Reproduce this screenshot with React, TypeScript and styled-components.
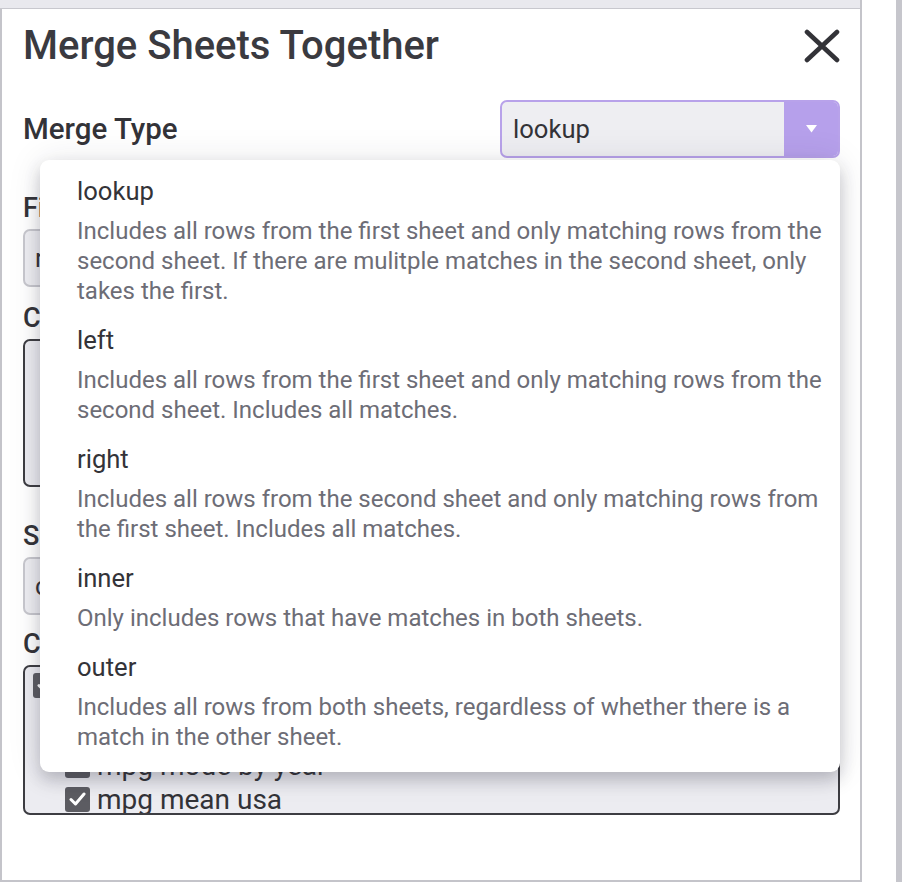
import React from "react";
import styled, { createGlobalStyle } from "styled-components";

const Global = createGlobalStyle`
  html, body { margin: 0; padding: 0; background: #ffffff; }
  body { font-family: Roboto, "Liberation Sans", sans-serif; }
  * { box-sizing: border-box; }
`;

const Page = styled.div`
  display: flex;
  width: 902px;
  height: 882px;
  overflow: hidden;
  background: #ffffff;
`;

const Column = styled.div`
  width: 862px;
  height: 882px;
  display: flex;
  flex-direction: column;
  border-right: 2px solid #c4c4ca;
  border-bottom: 2px solid #c4c4ca;
`;

const TopStrip = styled.div`
  height: 9px;
  flex: none;
  background: #e9e9ee;
  border-bottom: 1px solid #c8c8ce;
`;

const Body = styled.div`
  position: relative;
  flex: 1;
  border-left: 2px solid #c4c4ca;
  padding: 15px 20px 0 21px;
  display: flex;
  flex-direction: column;
  overflow: hidden;
`;

const Gutter = styled.div`
  width: 34px;
  flex: none;
  background: #ffffff;
`;

const ScrollBar = styled.div`
  width: 6px;
  flex: none;
  background: #c6c6cc;
`;

const Header = styled.div`
  display: flex;
  align-items: center;
  justify-content: space-between;
  height: 43px;
`;

const Title = styled.h1`
  margin: 0;
  font-size: 40px;
  line-height: 43px;
  font-weight: 500;
  color: #3a3a40;
`;

const CloseButton = styled.button`
  border: none;
  background: none;
  padding: 0;
  width: 36px;
  height: 34px;
  display: flex;
  cursor: pointer;
`;

const TypeRow = styled.div`
  display: flex;
  align-items: center;
  justify-content: space-between;
  margin-top: 33px;
  height: 58px;
`;

const BigLabel = styled.div`
  font-size: 29.5px;
  font-weight: 500;
  color: #333338;
`;

const Select = styled.div`
  width: 340px;
  height: 58px;
  border: 2px solid #b8a2ea;
  border-radius: 7px;
  background: #eeeef2;
  display: flex;
  align-items: center;
  overflow: hidden;
`;

const SelectValue = styled.div`
  flex: 1;
  padding-left: 11px;
  font-size: 25.6px;
  color: #333338;
`;

const SelectArrow = styled.div`
  width: 54px;
  align-self: stretch;
  background: #b6a0eb;
  display: flex;
  align-items: center;
  justify-content: center;
`;

const Section = styled.div<{ $gap: number }>`
  margin-top: ${(p) => p.$gap}px;
  display: flex;
  flex-direction: column;
`;

const FieldLabel = styled.div`
  font-size: 27px;
  line-height: 32px;
  font-weight: 500;
  color: #333338;
  margin-bottom: 5px;
`;

const Input = styled.div`
  height: 58px;
  border: 2px solid #c8c8ce;
  border-radius: 7px;
  background: #eeeef2;
  display: flex;
  align-items: center;
  padding-left: 10px;
  font-size: 25.6px;
  color: #333338;
`;

const ListBox = styled.div<{ $h: number }>`
  height: ${(p) => p.$h}px;
  border: 2px solid #3d3d42;
  border-radius: 7px;
  background: #ececf1;
  overflow: hidden;
  padding: 1px 8px 0;
`;

const CheckRow = styled.div<{ $indent: number; $after?: number }>`
  display: flex;
  align-items: center;
  gap: 7px;
  height: 34px;
  padding-left: ${(p) => p.$indent}px;
  margin-bottom: ${(p) => p.$after || 0}px;
  font-size: 28px;
  color: #333338;
`;

const Box = styled.span`
  width: 25px;
  height: 25px;
  border-radius: 3px;
  background: #5c5c62;
  display: flex;
  align-items: center;
  justify-content: center;
  flex: none;
`;

const Menu = styled.div`
  position: absolute;
  left: 38px;
  top: 151px;
  width: 800px;
  background: #ffffff;
  border-radius: 9px;
  padding: 7px 0 10px;
  box-shadow: 0 8px 16px rgba(40, 40, 60, 0.24), 0 0 34px rgba(40, 40, 60, 0.1);
  z-index: 2;
`;

const Option = styled.div`
  padding: 9px 5px 10px 37px;
`;

const OptionTitle = styled.div`
  font-size: 25.6px;
  line-height: 30px;
  color: #333338;
`;

const OptionDesc = styled.div`
  margin-top: 10px;
  font-size: 24px;
  line-height: 30px;
  color: #6d6d76;
`;

const Check = () => (
  <svg width="17" height="14" viewBox="0 0 17 14">
    <path d="M2 7.5 L6.5 12 L15 2" fill="none" stroke="#fff" strokeWidth="3" strokeLinecap="round" strokeLinejoin="round" />
  </svg>
);

const options = [
  {
    name: "lookup",
    desc:
      "Includes all rows from the first sheet and only matching rows from the second sheet. If there are mulitple matches in the second sheet, only takes the first.",
  },
  {
    name: "left",
    desc: "Includes all rows from the first sheet and only matching rows from the second sheet. Includes all matches.",
  },
  {
    name: "right",
    desc: "Includes all rows from the second sheet and only matching rows from the first sheet. Includes all matches.",
  },
  { name: "inner", desc: "Only includes rows that have matches in both sheets." },
  {
    name: "outer",
    desc: "Includes all rows from both sheets, regardless of whether there is a match in the other sheet.",
  },
];

export default function App() {
  return (
    <>
      <Global />
      <Page>
        <Column>
          <TopStrip />
          <Body>
            <Header>
              <Title>Merge Sheets Together</Title>
              <CloseButton aria-label="close">
                <svg width="36" height="34" viewBox="0 0 36 34">
                  <path d="M3 3 L33 31 M33 3 L3 31" stroke="#333338" strokeWidth="4.6" strokeLinecap="round" />
                </svg>
              </CloseButton>
            </Header>
            <TypeRow>
              <BigLabel>Merge Type</BigLabel>
              <Select>
                <SelectValue>lookup</SelectValue>
                <SelectArrow>
                  <svg width="11" height="8" viewBox="0 0 11 8">
                    <path d="M0 0 H11 L5.5 7.5 Z" fill="#ffffff" />
                  </svg>
                </SelectArrow>
              </Select>
            </TypeRow>
            <Section $gap={34}>
              <FieldLabel>First Sheet</FieldLabel>
              <Input>raw_data</Input>
            </Section>
            <Section $gap={15}>
              <FieldLabel>Columns to Keep</FieldLabel>
              <ListBox $h={148} />
            </Section>
            <Section $gap={33}>
              <FieldLabel>Second Sheet</FieldLabel>
              <Input>cars_df</Input>
            </Section>
            <Section $gap={13}>
              <FieldLabel>Columns to Keep</FieldLabel>
              <ListBox $h={150}>
                <CheckRow $indent={0} $after={12}>
                  <Box><Check /></Box>
                  Select all
                </CheckRow>
                <CheckRow $indent={32}>
                  <Box><Check /></Box>
                  mpg median usa
                </CheckRow>
                <CheckRow $indent={32}>
                  <Box><Check /></Box>
                  mpg mode by year
                </CheckRow>
                <CheckRow $indent={32}>
                  <Box><Check /></Box>
                  mpg mean usa
                </CheckRow>
              </ListBox>
            </Section>
            <Menu>
              {options.map((o) => (
                <Option key={o.name}>
                  <OptionTitle>{o.name}</OptionTitle>
                  <OptionDesc>{o.desc}</OptionDesc>
                </Option>
              ))}
            </Menu>
          </Body>
        </Column>
        <Gutter />
        <ScrollBar />
      </Page>
    </>
  );
}
